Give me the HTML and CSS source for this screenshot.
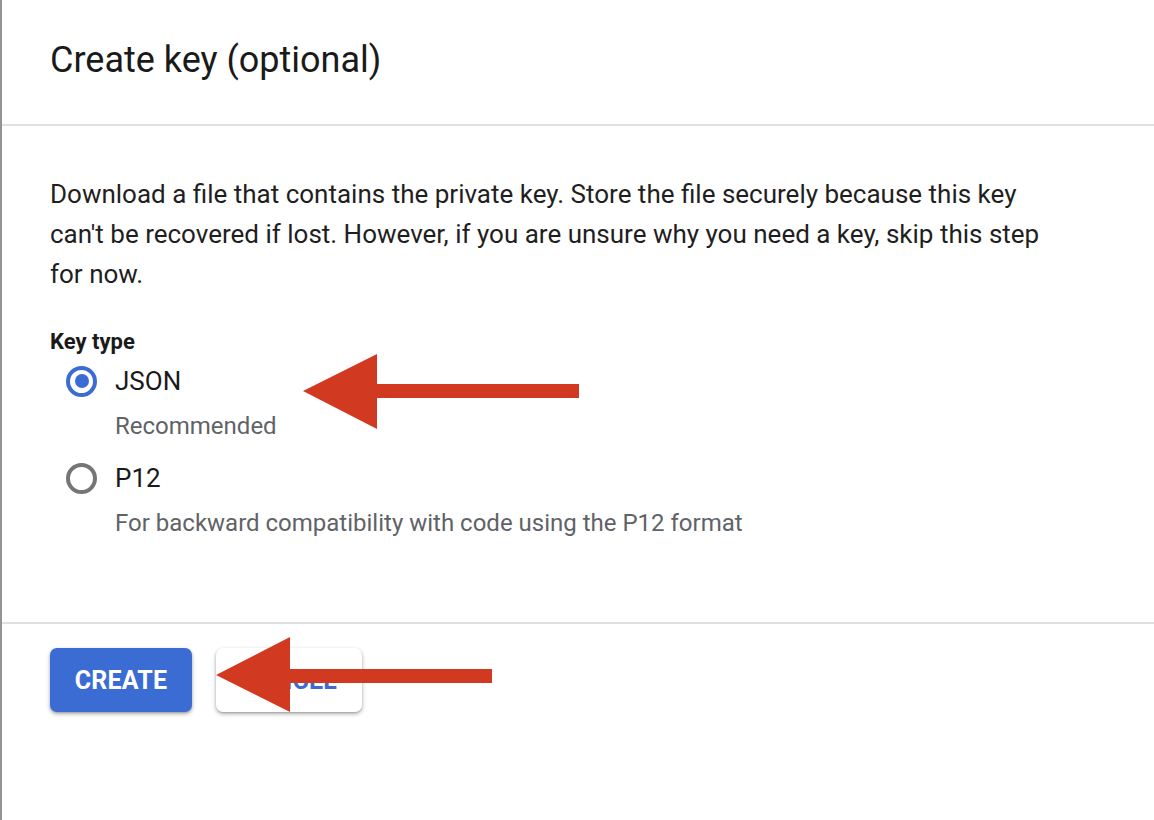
FILE: index.html
```html
<!DOCTYPE html>
<html lang="en">
<head>
<meta charset="utf-8">
<title>Create key (optional)</title>
<link rel="stylesheet" href="styles.css">
</head>
<body>
<div class="page">
  <header class="header">
    <h1 class="title">Create key (optional)</h1>
  </header>
  <section class="content">
    <p class="intro">Download a file that contains the private key. Store the file securely because this key can't be recovered if lost. However, if you are unsure why you need a key, skip this step for now.</p>
    <div class="field-label">Key type</div>
    <div class="options">
      <div class="option">
        <div class="option-row">
          <span class="radio radio-checked"><span class="radio-dot"></span></span>
          <span class="option-label">JSON</span>
        </div>
        <div class="option-hint">Recommended</div>
      </div>
      <div class="option">
        <div class="option-row">
          <span class="radio"></span>
          <span class="option-label">P12</span>
        </div>
        <div class="option-hint">For backward compatibility with code using the P12 format</div>
      </div>
    </div>
  </section>
  <footer class="footer">
    <button class="btn btn-primary">CREATE</button>
    <button class="btn btn-secondary">CANCEL</button>
  </footer>
  <svg class="arrows" width="1154" height="820" viewBox="0 0 1154 820" aria-hidden="true">
    <polygon points="303,391 377,354 377,429" fill="#d13a20"/>
    <rect x="375" y="384" width="204" height="14" fill="#d13a20"/>
    <polygon points="216,675 290,637 290,712" fill="#d13a20"/>
    <rect x="288" y="669" width="204" height="14" fill="#d13a20"/>
  </svg>
</div>
</body>
</html>
```
FILE: styles.css
```css
html, body {
  margin: 0;
  padding: 0;
  background: #ffffff;
}

body {
  font-family: Roboto, "Liberation Sans", Arial, sans-serif;
  color: #1f1f1f;
}

.page {
  position: relative;
  width: 1152px;
  height: 820px;
  border-left: 2px solid #939393;
  overflow: hidden;
}

.header {
  box-sizing: border-box;
  height: 126px;
  padding: 39px 0 0 48px;
  border-bottom: 2px solid #e0e0e0;
}

.title {
  margin: 0;
  font-size: 36px;
  line-height: 42px;
  font-weight: 400;
  color: #1a1a1a;
}

.content {
  box-sizing: border-box;
  height: 498px;
  padding: 48px 0 0 48px;
  border-bottom: 2px solid #e0e0e0;
}

.intro {
  margin: 0;
  width: 1000px;
  font-size: 26px;
  line-height: 40px;
  color: #1f1f1f;
}

.field-label {
  margin-top: 35px;
  font-size: 22px;
  line-height: 26px;
  font-weight: 700;
  color: #1a1a1a;
}

.options {
  display: flex;
  flex-direction: column;
  gap: 20px;
  margin-top: 10px;
}

.option-row {
  display: flex;
  align-items: center;
  height: 32px;
  padding-left: 16px;
  gap: 18px;
}

.radio {
  box-sizing: border-box;
  width: 31px;
  height: 31px;
  border-radius: 50%;
  border: 4px solid #757575;
  display: flex;
  align-items: center;
  justify-content: center;
  flex: none;
}

.radio-checked {
  border-color: #3b6cd4;
}

.radio-dot {
  width: 14px;
  height: 14px;
  border-radius: 50%;
  background: #3b6cd4;
}

.option-label {
  font-size: 26px;
  line-height: 32px;
  color: #1a1a1a;
}

.option-hint {
  margin-top: 13px;
  padding-left: 65px;
  font-size: 24px;
  line-height: 32px;
  color: #5f6368;
}

.footer {
  display: flex;
  gap: 24px;
  padding: 24px 0 0 48px;
}

.btn {
  box-sizing: border-box;
  height: 64px;
  border: none;
  border-radius: 7px;
  font-family: Roboto, "Liberation Sans", Arial, sans-serif;
  font-size: 25px;
  font-weight: 700;
  letter-spacing: 0.2px;
  box-shadow: 0 2px 4px rgba(0, 0, 0, 0.3), 0 1px 2px rgba(0, 0, 0, 0.15);
  padding: 0;
}

.btn-primary {
  width: 142px;
  background: #3b6cd4;
  color: #ffffff;
}

.btn-secondary {
  width: 146px;
  background: #ffffff;
  color: #3b6cd4;
}

.arrows {
  position: absolute;
  left: -2px;
  top: 0;
  pointer-events: none;
}
```
